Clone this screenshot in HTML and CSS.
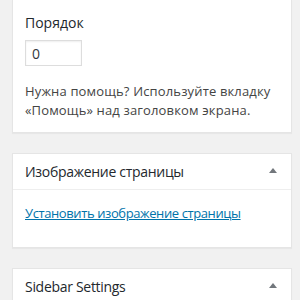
FILE: index.html
```html
<!DOCTYPE html>
<html lang="ru">
<head>
  <meta charset="UTF-8">
  <meta name="viewport" content="width=device-width, initial-scale=1.0">
  <title>Атрибуты страницы</title>
  <link rel="stylesheet" href="styles.css">
</head>
<body>
  <div class="sidebar">
    <div class="postbox postbox-cut">
      <div class="inside inside-attrs">
        <p class="attr-label">Порядок</p>
        <div class="order-field">
          <input type="text" class="order-input" value="0">
        </div>
        <p class="help">Нужна помощь? Используйте вкладку «Помощь» над заголовком экрана.</p>
      </div>
    </div>

    <div class="postbox">
      <div class="postbox-header">
        <h2 class="hndle">Изображение страницы</h2>
        <span class="toggle-arrow"></span>
      </div>
      <div class="inside inside-thumb">
        <a href="#" class="set-thumb">Установить изображение страницы</a>
      </div>
    </div>

    <div class="postbox">
      <div class="postbox-header">
        <h2 class="hndle">Sidebar Settings</h2>
        <span class="toggle-arrow"></span>
      </div>
      <div class="inside">
        <p class="help">&nbsp;</p>
      </div>
    </div>
  </div>
</body>
</html>
```

FILE: styles.css
```css
body {
  margin: 0;
  background: #f1f1f1;
  font-family: 'Open Sans', 'Noto Sans', sans-serif;
  font-size: 13px;
  color: #444;
}

.sidebar {
  width: 280px;
  margin-left: 12px;
}

.postbox {
  background: #fff;
  border: 1px solid #e5e5e5;
  box-shadow: 0 1px 1px rgba(0, 0, 0, 0.04);
  margin-bottom: 20px;
}

.postbox-cut {
  border-top: none;
}

.postbox-header {
  display: flex;
  align-items: center;
  justify-content: space-between;
  height: 35px;
  padding: 0 12px;
  border-bottom: 1px solid #eee;
}

.hndle {
  margin: 0;
  font-size: 14px;
  font-weight: 500;
  letter-spacing: -0.3px;
  color: #23282d;
}

.toggle-arrow {
  width: 0;
  height: 0;
  margin-right: 2px;
  margin-top: -2px;
  border-left: 4px solid transparent;
  border-right: 4px solid transparent;
  border-bottom: 5px solid #72777c;
}

.inside {
  padding: 0 12px 12px;
}

.inside-attrs {
  padding-top: 13px;
}

.attr-label {
  margin: 0;
  line-height: 20px;
  font-size: 14px;
  font-weight: 500;
  color: #23282d;
}

.order-field {
  margin-top: 7px;
}

.order-input {
  box-sizing: border-box;
  width: 57px;
  height: 26px;
  padding: 0 6px;
  border: 1px solid #ddd;
  box-shadow: inset 0 1px 2px rgba(0, 0, 0, 0.07);
  font-family: inherit;
  font-size: 14px;
  color: #32373c;
}

.help {
  margin: 16px 0 0;
  line-height: 19px;
  letter-spacing: 0.15px;
}

.inside-thumb {
  padding-top: 13px;
  padding-bottom: 24px;
  line-height: 20px;
}

.set-thumb {
  color: #0073aa;
  letter-spacing: -0.4px;
}
```
